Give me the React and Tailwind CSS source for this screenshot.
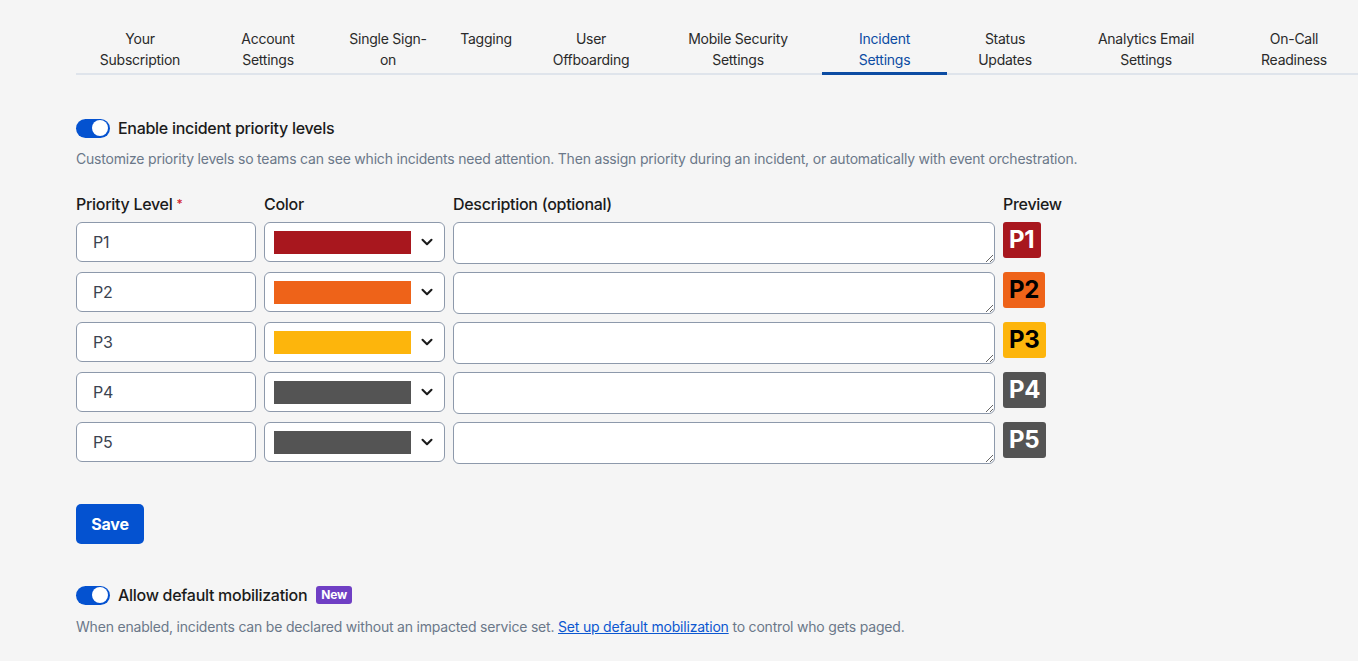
import React, { useState } from "react";
import { ChevronDown } from "lucide-react";

const tabs = [
  { label: ["Your", "Subscription"], w: "w-[128px]" },
  { label: ["Account", "Settings"], w: "w-[128px]" },
  { label: ["Single Sign-", "on"], w: "w-[112px]" },
  { label: ["Tagging"], w: "w-[84px]" },
  { label: ["User", "Offboarding"], w: "w-[126px]" },
  { label: ["Mobile Security", "Settings"], w: "w-[168px]" },
  { label: ["Incident", "Settings"], w: "w-[125px]", active: true },
  { label: ["Status", "Updates"], w: "w-[116px]" },
  { label: ["Analytics Email", "Settings"], w: "w-[166px]" },
  { label: ["On-Call", "Readiness"], w: "w-[130px]" },
];

const levels = [
  { name: "P1", swatch: "bg-[#a8171e]", badge: "bg-[#a8171e] text-white" },
  { name: "P2", swatch: "bg-[#ee6319]", badge: "bg-[#ee6319] text-black" },
  { name: "P3", swatch: "bg-[#fdb50c]", badge: "bg-[#fdb50c] text-black" },
  { name: "P4", swatch: "bg-[#545454]", badge: "bg-[#545454] text-white" },
  { name: "P5", swatch: "bg-[#545454]", badge: "bg-[#545454] text-white" },
];

const Toggle = ({ on, onClick }) => (
  <button
    onClick={onClick}
    className={`flex items-center w-[34px] h-[19px] rounded-full px-[2px] ${
      on ? "bg-[#0452d0] justify-end" : "bg-[#9aa5b1] justify-start"
    }`}
  >
    <span className="block w-[16px] h-[16px] rounded-full bg-white" />
  </button>
);

export default function App() {
  const [priorityOn, setPriorityOn] = useState(true);
  const [mobilizeOn, setMobilizeOn] = useState(true);

  return (
    <div
      className="min-h-screen bg-[#f5f5f5] pl-[76px] text-[#1b1b1b] tracking-[-0.0125em]"
      style={{ fontFamily: "Inter, 'Noto Sans', sans-serif" }}
    >
      {/* Tabs */}
      <nav className="flex border-b-2 border-[#dfe4eb]">
        {tabs.map((tab) => (
          <button
            key={tab.label.join(" ")}
            className={`${tab.w} shrink-0 flex flex-col items-center pt-[28px] pb-[2px] -mb-[2px] border-b-[3px] text-[14px] leading-[21px] tracking-[-0.018em] ${
              tab.active
                ? "border-[#0c4ca3] text-[#0c4ca3]"
                : "border-transparent text-[#2a2a2a]"
            }`}
          >
            {tab.label.map((line) => (
              <span key={line}>{line}</span>
            ))}
          </button>
        ))}
      </nav>

      {/* Priority levels */}
      <div className="flex items-center gap-[8px] mt-[41px] h-[24px]">
        <Toggle on={priorityOn} onClick={() => setPriorityOn(!priorityOn)} />
        <span className="text-[16px] font-medium tracking-[-0.018em]">
          Enable incident priority levels
        </span>
      </div>
      <p className="mt-[9px] text-[14px] leading-[20px] text-[#6b7889]">
        Customize priority levels so teams can see which incidents need attention. Then
        assign priority during an incident, or automatically with event orchestration.
      </p>

      <div className="grid grid-cols-[180px_181px_542px_auto] gap-x-[8px] gap-y-[8px] mt-[23px] w-fit">
        <div className="text-[16px] leading-[24px] font-medium tracking-[-0.018em] -mb-[2px]">
          Priority Level <span className="text-[#d3262f] text-[12px] align-top">*</span>
        </div>
        <div className="text-[16px] leading-[24px] font-medium tracking-[-0.018em] -mb-[2px]">
          Color
        </div>
        <div className="text-[16px] leading-[24px] font-medium tracking-[-0.018em] -mb-[2px]">
          Description (optional)
        </div>
        <div className="text-[16px] leading-[24px] font-medium tracking-[-0.018em] -mb-[2px]">
          Preview
        </div>

        {levels.map((lvl) => (
          <React.Fragment key={lvl.name}>
            <input
              defaultValue={lvl.name}
              className="h-[40px] w-[180px] rounded-[6px] border border-[#8d99ab] bg-white px-[16px] text-[16px] text-[#3b4350] outline-none"
            />
            <button className="h-[40px] w-[181px] flex items-center rounded-[6px] border border-[#8d99ab] bg-white pl-[9px] pr-[8px]">
              <span className={`block shrink-0 h-[23px] w-[137px] ${lvl.swatch}`} />
              <ChevronDown
                size={18}
                strokeWidth={2.75}
                className="shrink-0 text-[#1b1b1b] ml-auto"
              />
            </button>
            <textarea className="h-[42px] w-[542px] rounded-[6px] border border-[#8d99ab] bg-white px-[10px] py-[8px] text-[14px] outline-none" />
            <div className="flex items-start">
              <span
                className={`inline-flex items-center h-[36px] px-[6px] rounded-[3px] text-[24px] font-bold leading-none ${lvl.badge}`}
              >
                {lvl.name}
              </span>
            </div>
          </React.Fragment>
        ))}
      </div>

      <button className="mt-[40px] h-[40px] w-[68px] rounded-[5px] bg-[#0452d0] text-white text-[16px] font-bold">
        Save
      </button>

      {/* Default mobilization */}
      <div className="flex items-center gap-[8px] mt-[39px] h-[24px]">
        <Toggle on={mobilizeOn} onClick={() => setMobilizeOn(!mobilizeOn)} />
        <span className="text-[16px] font-medium tracking-[-0.018em]">
          Allow default mobilization
        </span>
        <span className="ml-[1px] inline-flex items-center h-[18px] px-[5px] rounded-[3px] bg-[#6f3fc4] text-white text-[12px] font-bold">
          New
        </span>
      </div>
      <p className="mt-[10px] text-[14px] leading-[20px] text-[#6b7889]">
        When enabled, incidents can be declared without an impacted service set.{" "}
        <a href="#" className="text-[#0b57d0] underline">
          Set up default mobilization
        </a>{" "}
        to control who gets paged.
      </p>
    </div>
  );
}
